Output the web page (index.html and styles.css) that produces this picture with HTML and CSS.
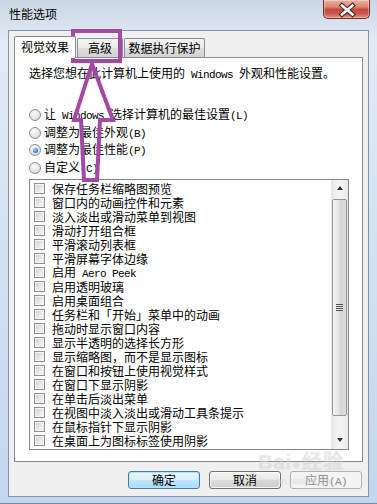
FILE: index.html
```html
<!DOCTYPE html>
<html lang="zh-CN">
<head>
<meta charset="UTF-8">
<meta name="viewport" content="width=device-width, initial-scale=1.0">
<title>性能选项</title>
<link rel="stylesheet" href="styles.css">
</head>
<body>

<div class="window">
  <div class="titlebar">
    <span class="title">性能选项</span>
    <div class="close-btn">
      <svg width="47" height="19" viewBox="0 0 47 19">
        <path d="M19 5.5 L29.5 14.5 M29.5 5.5 L19 14.5" stroke="#3b2421" stroke-width="4.6" stroke-linecap="square" fill="none"/>
        <path d="M19 5.5 L29.5 14.5 M29.5 5.5 L19 14.5" stroke="#ffffff" stroke-width="2.6" stroke-linecap="square" fill="none"/>
      </svg>
    </div>
  </div>

  <div class="client">
    <div class="tabs">
      <div class="tab active">视觉效果</div>
      <div class="tab tab-adv">高级</div>
      <div class="tab tab-dep">数据执行保护</div>
    </div>

    <div class="panel">
      <p class="intro">选择您想在此计算机上使用的<span class="latin"> Windows </span>外观和性能设置。</p>

      <div class="radios">
        <div class="radio-row"><span class="radio"></span><span class="label">让<span class="latin"> Windows </span>选择计算机的最佳设置<span class="latin">(L)</span></span></div>
        <div class="radio-row"><span class="radio"></span><span class="label">调整为最佳外观<span class="latin">(B)</span></span></div>
        <div class="radio-row"><span class="radio checked"></span><span class="label">调整为最佳性能<span class="latin">(P)</span></span></div>
        <div class="radio-row"><span class="radio"></span><span class="label">自定义<span class="latin">(C)</span></span></div>
      </div>

      <div class="listbox">
        <div class="items">
          <div class="item"><span class="check"></span><span class="label">保存任务栏缩略图预览</span></div>
          <div class="item"><span class="check"></span><span class="label">窗口内的动画控件和元素</span></div>
          <div class="item"><span class="check"></span><span class="label">淡入淡出或滑动菜单到视图</span></div>
          <div class="item"><span class="check"></span><span class="label">滑动打开组合框</span></div>
          <div class="item"><span class="check"></span><span class="label">平滑滚动列表框</span></div>
          <div class="item"><span class="check"></span><span class="label">平滑屏幕字体边缘</span></div>
          <div class="item"><span class="check"></span><span class="label">启用<span class="latin"> Aero Peek</span></span></div>
          <div class="item"><span class="check"></span><span class="label">启用透明玻璃</span></div>
          <div class="item"><span class="check"></span><span class="label">启用桌面组合</span></div>
          <div class="item"><span class="check"></span><span class="label">任务栏和「开始」菜单中的动画</span></div>
          <div class="item"><span class="check"></span><span class="label">拖动时显示窗口内容</span></div>
          <div class="item"><span class="check"></span><span class="label">显示半透明的选择长方形</span></div>
          <div class="item"><span class="check"></span><span class="label">显示缩略图，而不是显示图标</span></div>
          <div class="item"><span class="check"></span><span class="label">在窗口和按钮上使用视觉样式</span></div>
          <div class="item"><span class="check"></span><span class="label">在窗口下显示阴影</span></div>
          <div class="item"><span class="check"></span><span class="label">在单击后淡出菜单</span></div>
          <div class="item"><span class="check"></span><span class="label">在视图中淡入淡出或滑动工具条提示</span></div>
          <div class="item"><span class="check"></span><span class="label">在鼠标指针下显示阴影</span></div>
          <div class="item"><span class="check"></span><span class="label">在桌面上为图标标签使用阴影</span></div>
        </div>
        <div class="scrollbar">
          <div class="sb-btn"><span class="arrow-up"></span></div>
          <div class="sb-thumb"><span class="grip"></span></div>
          <div class="sb-track"></div>
          <div class="sb-btn"><span class="arrow-down"></span></div>
        </div>
      </div>
    </div>

    <div class="buttons">
      <button class="btn default">确定</button>
      <button class="btn">取消</button>
      <button class="btn disabled">应用<span class="latin">(A)</span></button>
    </div>
  </div>

  <div class="watermark">
    <span class="wm-big">Bai<span class="wm-paw">●</span>经验</span>
    <span class="wm-small">jingyan.baidu.com</span>
  </div>

  <!-- purple annotation drawn on top of the screenshot -->
  <svg class="annotation" width="377" height="504" viewBox="0 0 377 504">
    <rect x="73" y="31" width="47" height="30" fill="none" stroke="#a349a4" stroke-width="4"/>
    <polygon points="92,64 113,120 100,120 97,180 84,180 81,120 74,120" fill="none" stroke="#a349a4" stroke-width="4" stroke-linejoin="miter"/>
  </svg>
</div>

</body>
</html>
```

FILE: styles.css
```css
* {
  box-sizing: border-box;
}
body {
  margin: 0;
  font-family: "Noto Sans CJK SC", "Noto Sans", sans-serif;
  font-size: 12px;
  color: #000;
}
.latin {
  font-family: "Liberation Mono", monospace;
  font-size: 11px;
  letter-spacing: -0.6px;
  white-space: pre;
}
.label {
  line-height: 14px;
  white-space: nowrap;
}

/* window frame */
.window {
  position: relative;
  width: 377px;
  height: 504px;
  display: flex;
  flex-direction: column;
  overflow: hidden;
  background: linear-gradient(180deg, #c9d6e4 0%, #e2ebf5 8%, #d6e4f3 40%, #c2d7ee 100%);
  border-bottom: 1px solid #7489a3;
}
.titlebar {
  height: 30px;
  display: flex;
  align-items: flex-start;
  padding-left: 9px;
}
.title {
  margin-top: 6px;
  line-height: 16px;
  font-size: 12px;
}
.close-btn {
  margin-left: auto;
  margin-right: 7px;
  width: 47px;
  height: 19px;
  border: 1px solid #6e2f27;
  border-top: none;
  border-radius: 0 0 5px 5px;
  background: linear-gradient(180deg, #eab0a3 0%, #d98371 40%, #c5483b 52%, #c9564a 75%, #e0917f 100%);
  box-shadow: inset 0 0 0 1px rgba(255, 255, 255, 0.35);
}
.close-btn svg {
  display: block;
  margin-left: -1px;
}

/* client area */
.client {
  margin: 0 8px;
  height: 467px;
  border: 1px solid #8494a8;
  background: #f0f0f0;
  display: flex;
  flex-direction: column;
}
.tabs {
  height: 26px;
  padding: 5px 0 0 5px;
  display: flex;
  align-items: flex-end;
}
.tab {
  position: relative;
  height: 19px;
  line-height: 18px;
  text-align: center;
  border: 1px solid #898c95;
  border-bottom: none;
  border-radius: 2px 2px 0 0;
  background: linear-gradient(180deg, #f4f4f4 0%, #ececec 50%, #dedede 51%, #d2d2d2 100%);
}
.tab.active {
  width: 62px;
  height: 22px;
  line-height: 20px;
  margin-bottom: -1px;
  z-index: 1;
  background: #fff;
}
.tab-adv {
  width: 46px;
  margin-left: 1px;
}
.tab-dep {
  width: 81px;
  margin-left: 1px;
}
.panel {
  margin-left: 5px;
  width: 349px;
  height: 405px;
  border: 1px solid #898c95;
  background: #fff;
  padding: 8px 0 0 14px;
}
.intro {
  margin: 0;
  line-height: 14px;
  white-space: nowrap;
}
.radios {
  margin-top: 24px;
}
.radio-row {
  height: 17.7px;
  display: flex;
  align-items: center;
}
.radio {
  width: 12px;
  height: 12px;
  margin-right: 3px;
  border: 1px solid #8e8f8f;
  border-radius: 50%;
  background: radial-gradient(circle at 40% 35%, #fbfbfb 0%, #e6e6e6 50%, #cfcfcf 100%);
  display: flex;
  align-items: center;
  justify-content: center;
}
.radio.checked::after {
  content: "";
  width: 5px;
  height: 5px;
  border-radius: 50%;
  background: radial-gradient(circle at 40% 35%, #a6d3fb 0%, #3c87d6 55%, #174f93 100%);
}

/* list of effects */
.listbox {
  margin-top: 2px;
  width: 320px;
  height: 271px;
  border: 1px solid #828790;
  display: flex;
}
.items {
  flex: 1;
  padding-top: 2px;
}
.item {
  height: 14px;
  display: flex;
  align-items: center;
  padding-left: 4px;
}
.check {
  width: 11px;
  height: 11px;
  margin-right: 7px;
  border: 1px solid #8e8f8f;
  background: linear-gradient(135deg, #cbcdd1 0%, #e4e5e6 50%, #f8f8f8 100%);
  box-shadow: inset 0 0 0 1px #f4f4f4;
}
.scrollbar {
  width: 17px;
  display: flex;
  flex-direction: column;
  background: linear-gradient(90deg, #e6e6e6, #f4f4f4 40%, #f4f4f4 60%, #e9e9e9);
}
.sb-btn {
  height: 17px;
  display: flex;
  align-items: center;
  justify-content: center;
}
.arrow-up {
  border-left: 3.5px solid transparent;
  border-right: 3.5px solid transparent;
  border-bottom: 4px solid #333;
}
.arrow-down {
  border-left: 3.5px solid transparent;
  border-right: 3.5px solid transparent;
  border-top: 4px solid #333;
}
.sb-thumb {
  height: 217px;
  margin: 2px 1px 0;
  border: 1px solid #979797;
  border-radius: 2px;
  background: linear-gradient(90deg, #f3f3f3 0%, #e6e6e6 45%, #d7d7d7 55%, #dcdcdc 100%);
  display: flex;
  align-items: center;
  justify-content: center;
}
.grip {
  width: 7px;
  height: 7px;
  background: repeating-linear-gradient(180deg, #4f4f4f 0, #4f4f4f 1px, #e8e8e8 1px, #e8e8e8 2px);
}
.sb-track {
  flex: 1;
}

/* dialog buttons */
.buttons {
  margin-top: 9px;
  padding-right: 6px;
  display: flex;
  justify-content: flex-end;
  gap: 9px;
}
.btn {
  width: 72px;
  height: 18px;
  padding: 0;
  font-family: inherit;
  font-size: 12px;
  line-height: 16px;
  color: #000;
  border: 1px solid #707070;
  border-radius: 3px;
  background: linear-gradient(180deg, #f2f2f2 0%, #ebebeb 48%, #dddddd 52%, #cfcfcf 100%);
  box-shadow: inset 0 0 0 1px rgba(255, 255, 255, 0.7);
}
.btn.default {
  border-color: #3c7fb1;
  background: linear-gradient(180deg, #eaf6fd 0%, #d9f0fc 48%, #bee6fd 52%, #a7d9f5 100%);
  box-shadow: inset 0 0 0 1px #b9e1f9;
}
.btn.disabled {
  color: #8d8d8d;
  border-color: #adb2b5;
  background: #f4f4f4;
  box-shadow: none;
}

/* faint baidu watermark */
.watermark {
  position: absolute;
  left: 258px;
  top: 450px;
  display: flex;
  flex-direction: column;
  color: rgba(255, 255, 255, 0.35);
  text-shadow: 0 0 1px rgba(130, 130, 130, 0.3);
  pointer-events: none;
}
.wm-big {
  font-family: "Liberation Sans", sans-serif;
  font-size: 20px;
  line-height: 24px;
  font-weight: bold;
  letter-spacing: 1px;
}
.wm-paw {
  font-size: 14px;
}
.wm-small {
  font-family: "Liberation Sans", sans-serif;
  font-size: 9px;
  line-height: 10px;
}
.annotation {
  position: absolute;
  left: 0;
  top: 0;
  pointer-events: none;
}
```
